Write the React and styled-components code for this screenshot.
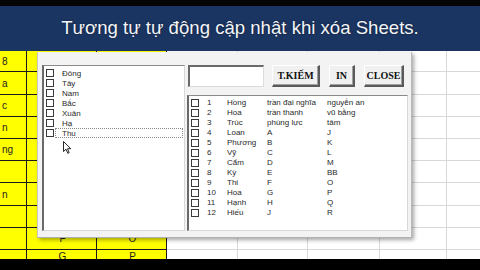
import React from "react";
import styled, { createGlobalStyle } from "styled-components";

const GlobalStyle = createGlobalStyle`
  html, body { margin: 0; padding: 0; background: #000; }
  * { box-sizing: border-box; }
`;

const colWidths = [27, 70, 70, 71, 70, 72, 67, 40];
const rowHeights = [21, 23, 22, 22, 22, 22, 23, 22, 22, 22];

// sheet cell text, keyed by "row-col"
const cellText = {
  "0-0": "8",
  "0-1": "t",
  "1-0": "a",
  "2-0": "c",
  "3-0": "n",
  "4-0": "ng",
  "6-0": "n",
  "8-1": "F",
  "8-2": "O",
  "9-1": "G",
  "9-2": "P",
};

const leftItems = ["Đông", "Tây", "Nam", "Bắc", "Xuân", "Hạ", "Thu"];

const rightItems = [
  ["1", "Hồng", "trần đại nghĩa", "nguyễn an"],
  ["2", "Hoa", "trần thanh", "vũ bằng"],
  ["3", "Trúc", "phùng lực", "tâm"],
  ["4", "Loan", "A", "J"],
  ["5", "Phương", "B", "K"],
  ["6", "Vỹ", "C", "L"],
  ["7", "Cẩm", "D", "M"],
  ["8", "Kỳ", "E", "BB"],
  ["9", "Thi", "F", "O"],
  ["10", "Hoa", "G", "P"],
  ["11", "Hạnh", "H", "Q"],
  ["12", "Hiếu", "J", "R"],
];

const App = () => (
  <Page>
    <GlobalStyle />
    <TopStrip />
    <TitleBar>Tương tự tự động cập nhật khi xóa Sheets.</TitleBar>
    <Sheet>
      {rowHeights.map((_, r) =>
        colWidths.map((_, c) => (
          <Cell
            key={`${r}-${c}`}
            $yellow={c < 3}
            $center={c > 0}
            $top={r === rowHeights.length - 1}
          >
            {cellText[`${r}-${c}`] || ""}
          </Cell>
        ))
      )}
      <Dialog>
        <ListBox $w={143} $h={166}>
          <LeftList>
            {leftItems.map((name, i) => (
              <LeftRow key={name}>
                <Check />
                <LeftLabel $focus={i === leftItems.length - 1}>{name}</LeftLabel>
              </LeftRow>
            ))}
          </LeftList>
        </ListBox>
        <RightColumn>
          <TopRow>
            <TextBox />
            <Button $w={48}>T.KIẾM</Button>
            <Button $w={26}>IN</Button>
            <Button $w={40}>CLOSE</Button>
          </TopRow>
          <ListBox $w={221} $h={137}>
            <RightList>
              {rightItems.map((row) => (
                <RightRow key={row[0]}>
                  <Check />
                  {row.map((v, j) => (
                    <span key={j}>{v}</span>
                  ))}
                </RightRow>
              ))}
            </RightList>
          </ListBox>
        </RightColumn>
        <Cursor width="9" height="13" viewBox="0 0 9 13">
          <path
            d="M0.5 0.5 L0.5 10.5 L3 8.2 L4.8 12.3 L6.2 11.7 L4.5 7.7 L7.8 7.7 Z"
            fill="#fff"
            stroke="#111"
            strokeWidth="0.9"
            strokeLinejoin="round"
          />
        </Cursor>
      </Dialog>
    </Sheet>
    <BottomStrip />
  </Page>
);

export default App;

const Page = styled.div`
  width: 480px;
  height: 270px;
  background: #000;
  display: flex;
  flex-direction: column;
  overflow: hidden;
`;

const TopStrip = styled.div`
  height: 6px;
  background: #050505;
`;

const TitleBar = styled.div`
  height: 45px;
  background: #1b3562;
  display: flex;
  align-items: center;
  justify-content: center;
  padding-bottom: 2px;
  color: #f2f5fa;
  font-family: "Liberation Sans", Arial, sans-serif;
  font-size: 18.6px;
  text-shadow: 0 0 2px rgba(0, 0, 0, 0.6);
`;

const Sheet = styled.div`
  position: relative;
  height: 208px;
  background: #fff;
  overflow: hidden;
  display: grid;
  grid-template-columns: ${colWidths.map((w) => `${w}px`).join(" ")};
  grid-template-rows: ${rowHeights.map((h) => `${h}px`).join(" ")};
`;

const Cell = styled.div`
  background: ${(p) => (p.$yellow ? "#ffff00" : "#ffffff")};
  border-right: 1px solid ${(p) => (p.$yellow ? "#1a1a1a" : "#d8d8d8")};
  border-bottom: 1px solid ${(p) => (p.$yellow ? "#1a1a1a" : "#d8d8d8")};
  display: flex;
  align-items: ${(p) => (p.$top ? "flex-start" : "center")};
  justify-content: ${(p) => (p.$center ? "center" : "flex-start")};
  padding-left: 2px;
  padding-top: ${(p) => (p.$top ? "1px" : "0")};
  font-family: "Liberation Sans", Arial, sans-serif;
  font-size: 10px;
  line-height: 11px;
  color: #222;
  overflow: hidden;
  white-space: nowrap;
`;

const Dialog = styled.div`
  position: absolute;
  left: 37px;
  top: 1px;
  width: 375px;
  height: 186px;
  background: #f3f3f3;
  border-left: 1px solid #c8c8c8;
  border-right: 1px solid #b8b8b8;
  border-bottom: 1px solid #b0b0b0;
  box-shadow: 2px 2px 4px rgba(0, 0, 0, 0.35);
  display: flex;
  gap: 2px;
  padding: 13px 3px 6px 4px;
`;

const ListBox = styled.div`
  width: ${(p) => p.$w}px;
  height: ${(p) => p.$h}px;
  background: #fff;
  border-top: 1px solid #8a8a8a;
  border-left: 2px solid #6a6a6a;
  border-right: 1px solid #d8d8d8;
  border-bottom: 1px solid #d8d8d8;
  overflow: hidden;
  font-family: "Liberation Sans", Arial, sans-serif;
  font-size: 8px;
  color: #2a2a2a;
`;

const LeftList = styled.div`
  display: flex;
  flex-direction: column;
  padding-top: 2px;
`;

const LeftRow = styled.div`
  display: flex;
  align-items: center;
  height: 10px;
  padding-left: 2px;
`;

const Check = styled.span`
  width: 8px;
  height: 8px;
  border: 1px solid #3a3a3a;
  background: #fff;
  flex: none;
`;

const LeftLabel = styled.span`
  flex: 1;
  height: 10px;
  line-height: 9px;
  margin-left: 1px;
  margin-right: 1px;
  padding-left: 6px;
  border: 1px dotted ${(p) => (p.$focus ? "#8a8a8a" : "transparent")};
`;

const RightColumn = styled.div`
  display: flex;
  flex-direction: column;
  gap: 8px;
`;

const TopRow = styled.div`
  display: flex;
  align-items: stretch;
  height: 22px;
  padding-left: 1px;
  gap: 8px;
`;

const TextBox = styled.div`
  width: 76px;
  background: #fff;
  border-top: 2px solid #6a6a6a;
  border-left: 2px solid #6a6a6a;
  border-right: 1px solid #dcdcdc;
  border-bottom: 1px solid #dcdcdc;
  margin-right: -1px;
`;

const Button = styled.div`
  width: ${(p) => p.$w}px;
  background: #f0f0f0;
  border-top: 1px solid #fff;
  border-left: 1px solid #fff;
  border-right: 2px solid #5a5a5a;
  border-bottom: 2px solid #5a5a5a;
  box-shadow: inset -1px -1px 0 #a0a0a0;
  display: flex;
  align-items: center;
  justify-content: center;
  font-family: "Liberation Serif", "Times New Roman", serif;
  font-weight: bold;
  font-size: 10px;
  color: #111;
  margin-left: 1px;
`;

const RightList = styled.div`
  display: flex;
  flex-direction: column;
  padding-top: 2px;
`;

const RightRow = styled.div`
  display: grid;
  grid-template-columns: 16px 20px 40px 60px 1fr;
  align-items: center;
  height: 10px;
  padding-left: 2px;
  white-space: nowrap;
`;

const Cursor = styled.svg`
  position: absolute;
  left: 25px;
  top: 89px;
`;

const BottomStrip = styled.div`
  flex: 1;
  background: #000;
`;
